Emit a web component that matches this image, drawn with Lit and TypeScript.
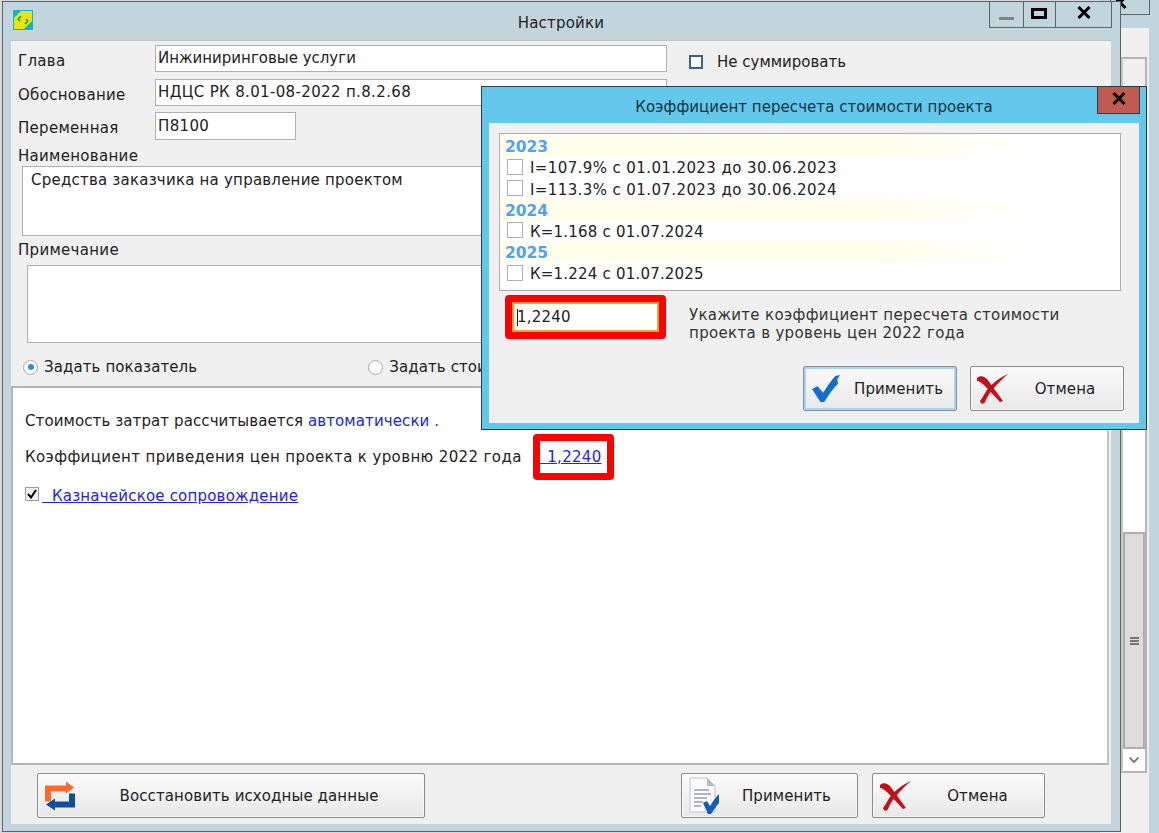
import { LitElement, html, css, svg } from "lit";
import { customElement } from "lit/decorators.js";

const crossIcon = svg`<svg viewBox="0 0 32 30" width="32" height="30"><path d="M0 4 C3 1 7 2 10 5 L26 27 L23 28 L8 12 C5 9 2 7 0 7 Z" fill="#c1121c"/><path d="M31 0 C24 3 15 9 10 16 C7 20 5 25 3 27 C4 31 7 30 8 28 C10 23 13 18 17 14 C21 9 26 4 31 0 Z" fill="#c1121c"/></svg>`;
const checkIcon = svg`<svg viewBox="0 0 32 30" width="30" height="28"><path d="M1 15 L7 12 L13 19 C17 12 21 7 26 1 L31 0 L28 5 L29 9 C24 14 19 21 14 29 L10 29 Z" fill="#0f6fd0"/></svg>`;
const swapIcon = svg`<svg viewBox="0 0 31 31" width="31" height="31"><path d="M0 5 H21 V1 L29 7 L21 13 V11 H6 V21 H0 Z" fill="#ff6a2b"/><path d="M30 13 V27 H10 V30 L1 24 L10 18 V21 H24 V13 Z" fill="#0f4e9a"/></svg>`;
const docIcon = svg`<svg viewBox="0 0 32 38" width="32" height="38"><path d="M1 1 H18 L26 9 V35 H1 Z" fill="#fafafa" stroke="#c4c8cc"/><path d="M18 1 V9 H26 Z" fill="#b8bcc0"/><path d="M5 13 H20 M5 17 H22 M5 21 H18 M5 25 H14 M5 29 H12" stroke="#9aa0a6" stroke-width="1.3"/><path d="M14 26 L18 24 L21 29 C24 24 27 20 30 17 L30 26 C27 29 25 33 22 37 L19 37 Z" fill="#0f5fb8"/></svg>`;
const boldX = svg`<svg viewBox="0 0 14 13" width="14" height="13"><path d="M1.5 1 L12.5 12 M12.5 1 L1.5 12" stroke="#000" stroke-width="3"/></svg>`;

@customElement("app-root")
export class AppRoot extends LitElement {
  static styles = css`
    :host { display: block; width: 1159px; height: 833px; font-family: "DejaVu Sans", sans-serif; font-size: 15px; color: #222; }
    * { box-sizing: border-box; }
    .desk { position: relative; width: 1159px; height: 833px; overflow: hidden; background: #d8d8d8; }

    .back { position: absolute; left: 1100px; top: 0; width: 59px; height: 833px; background: #c2d5dc; }
    .back-btn { position: absolute; left: 10px; top: -2px; width: 40px; height: 17px; border: 1px solid #5a6468; }
    .back-x { position: absolute; left: 13px; top: -5px; }
    .back-body { position: absolute; left: 0; top: 28px; width: 49px; bottom: 0; background: #f0f0f0; }
    .scroll { position: absolute; left: 21px; top: 57px; width: 26px; height: 716px; border: 2px solid #b4b4b4; border-left: 2px solid #c8c8c8; background: #fff; display: flex; flex-direction: column; }
    .sup { height: 36px; flex: none; background: #f0f0f0; }
    .track { flex: 1; }
    .thumb { height: 217px; flex: none; background: #dcdcdc; border: 2px solid #aeaeae; display: flex; flex-direction: column; align-items: center; justify-content: center; gap: 1px; }
    .thumb i { display: block; width: 9px; height: 2px; background: #777; }
    .sdown { height: 22px; flex: none; display: flex; align-items: center; justify-content: center; background: #fff; }

    .win { position: absolute; left: 2px; top: 1px; width: 1119px; height: 831px; background: #c2d5dc; border: 1px solid #5a6468; padding: 0 9px 8px 8px; display: flex; flex-direction: column; }
    .title { height: 38px; flex: none; display: flex; align-items: flex-start; position: relative; }
    .app-ico { margin: 8px 0 0 2px; width: 20px; height: 20px; }
    .title-text { position: absolute; left: 0; right: 0; top: 11px; text-align: center; letter-spacing: 0.2px; line-height: 20px; color: #222; }
    .wbtns { position: absolute; right: -1px; top: -1px; height: 27px; display: flex; border: 1px solid #5a6468; border-top: none; }
    .wbtn { display: flex; align-items: center; justify-content: center; border-left: 1px solid #5a6468; }
    .wbtn:first-child { border-left: none; }
    .wb-min { width: 33px; }
    .wb-min i { display: block; width: 15px; height: 3px; background: #808080; margin-top: 9px; }
    .wb-max { width: 32px; }
    .wb-max i { display: block; width: 16px; height: 11px; border: 3px solid #000; margin: -2px 0 0 -2px; }
    .wb-close { width: 56px; padding-bottom: 3px; }

    .panel { flex: 1; background: #f0f0f0; border-top: 1px solid #b9c6cb; display: flex; flex-direction: column; width: 1100px; }
    .form { height: 346px; flex: none; padding: 4px 0 0 7px; display: flex; flex-direction: column; }
    .row { display: flex; align-items: flex-start; }
    .lbl { width: 137px; flex: none; padding-top: 6px; line-height: 20px; letter-spacing: 0.3px; }
    .inp { height: 27px; background: #fff; border: 1px solid #b0b0b0; padding: 0 0 1px 2px; display: flex; align-items: center; flex: none; }
    .w512 { width: 512px; }
    .w141 { width: 141px; height: 28px; }
    .digits { letter-spacing: 0.35px; }
    .r2 { margin-top: 7px; }
    .r3 { margin-top: 6px; }
    .chk-wrap { display: flex; align-items: center; margin: 8px 0 0 22px; gap: 14px; }
    .chk { width: 14px; height: 14px; border: 2px solid #3f6288; background: #fff; flex: none; }
    .cap { line-height: 18px; margin-top: 7px; height: 19px; letter-spacing: 0.3px; }
    .cap2 { margin-top: 5px; height: 18px; }
    .ta { background: #fff; border: 1px solid #b0b0b0; }
    .ta1 { height: 70px; margin-left: 4px; margin-right: 10px; padding: 3px 8px; line-height: 20px; letter-spacing: 0.22px; }
    .ta2 { height: 78px; margin-left: 9px; margin-right: 10px; margin-top: 6px; }
    .radios { display: flex; align-items: center; margin-top: 14px; margin-left: 5px; height: 20px; letter-spacing: 0.1px; white-space: nowrap; }
    .radio { width: 15px; height: 15px; border-radius: 50%; border: 1px solid #a8a8a8; background: #fff; display: flex; align-items: center; justify-content: center; flex: none; margin-right: 6px; }
    .radio.on::after { content: ""; width: 6px; height: 6px; border-radius: 50%; background: #2f8ae8; }
    .r-b { margin-left: 171px; }

    .white { height: 379px; flex: none; width: 1098px; background: #fff; border: 2px solid #b4b4b4; border-right-color: #c4c4c4; margin-top: -1px; padding: 0 0 0 12px; display: flex; flex-direction: column; }
    .line { line-height: 20px; white-space: pre; }
    .l1 { margin-top: 23px; letter-spacing: 0.1px; }
    .l2 { margin-top: 3px; display: flex; align-items: center; letter-spacing: 0.38px; }
    .a { color: #2323e6; }
    .u { color: #2323e6; text-decoration: underline; white-space: pre; }
    .red-link { border: 7px solid #ff0000; border-radius: 4px; width: 81px; height: 46px; margin-left: 11px; display: flex; align-items: center; letter-spacing: 0.3px; word-spacing: -1.3px; }
    .l3 { margin-top: 6px; display: flex; align-items: center; letter-spacing: 0.2px; }
    .cb3 { width: 14px; height: 14px; background: #f0f0f0; border: 1px solid #a0a0a0; margin: -4px 3px 0 0; display: flex; align-items: center; justify-content: center; }

    .bottom { height: 59px; flex: none; display: flex; padding: 8px 0 0 26px; letter-spacing: 0.1px; }
    .btn { height: 45px; border: 1px solid #8c8c8c; border-radius: 2px; background: linear-gradient(#fbfbfb, #e8e8e8); display: flex; align-items: center; position: relative; flex: none; box-shadow: inset 0 0 0 1px #f8f8f8; color: #222; }
    .btn svg { position: absolute; top: 50%; transform: translateY(-50%); }
    .btn span { position: absolute; left: 0; right: 0; text-align: center; }
    .b-restore { width: 388px; }
    .b-restore svg { left: 7px; }
    .b-restore span { left: 54px; right: 18px; }
    .b-apply { width: 177px; margin-left: 256px; }
    .b-apply svg { left: 7px; }
    .b-apply span { left: 52px; right: 18px; }
    .b-cancel { width: 173px; margin-left: 14px; }
    .b-cancel svg { left: 7px; }
    .b-cancel span { left: 54px; right: 16px; }

    .dlg { position: absolute; left: 481px; top: 86px; width: 666px; height: 344px; background: #64c8ec; border: 1px solid #2c3c44; padding: 0 7px 6px 7px; display: flex; flex-direction: column; }
    .d-title { height: 36px; flex: none; text-align: center; line-height: 40px; letter-spacing: 0.05px; color: #16323c; }
    .d-close { position: absolute; right: 6px; top: 0; width: 43px; height: 27px; background: #c15a52; border: 1px solid #2c3c44; border-top: none; display: flex; align-items: center; justify-content: center; padding-bottom: 3px; }
    .d-body { flex: 1; background: #f0f0f0; padding: 10px 0 0 10px; display: flex; flex-direction: column; }
    .list { width: 622px; height: 158px; flex: none; background: #fff; border: 1px solid #aeaeae; padding: 1px 1px; }
    .yr { height: 21px; line-height: 25px; color: #4fa3f5; font-weight: 700; font-size: 15.5px; padding-left: 4px; background: linear-gradient(90deg, #fffeea 0, #fffeea 60%, #ffffff 86%); }
    .it { height: 21.4px; display: flex; align-items: center; padding: 3px 0 0 6px; color: #222; }
    .it .cb { margin-top: -3px; }
    .sp-a { letter-spacing: 0.4px; }
    .sp-b { letter-spacing: 0.2px; }
    .cb { width: 16px; height: 16px; border: 1px solid #b0b0b0; background: #fff; margin-right: 7px; flex: none; }
    .d-row { display: flex; margin-top: 4px; margin-left: 6px; }
    .red-box { width: 161px; height: 44px; border: 7px solid #ff0000; border-radius: 4px; flex: none; }
    .d-inp { height: 100%; border: 2px solid #f0a030; background: #fff; display: flex; align-items: center; padding-left: 3px; letter-spacing: 0.2px; }
    .caret { width: 1px; height: 17px; background: #222; margin-right: -1px; }
    .hint { margin: 11px 0 0 23px; line-height: 18px; color: #333; letter-spacing: 0.33px; white-space: nowrap; }
    .d-btns { display: flex; margin: 24px 0 0 304px; letter-spacing: 0.1px; }
    .d-btns .btn { width: 154px; }
    .focus { border: 1px solid #8a8f94; box-shadow: inset 0 0 0 2px #a9d4f8; }
    .btn.d-apply svg { left: 7px; }
    .btn.d-apply span { left: 50px; right: 13px; }
    .d-cancel { margin-left: 13px; }
    .btn.d-cancel svg { left: 6px; }
    .btn.d-cancel span { left: 52px; right: 16px; }
  `;

  private item(t: string, cls: string) {
    return html`<div class="it ${cls}"><div class="cb"></div>${t}</div>`;
  }

  render() {
    return html`<div class="desk">
      <div class="back">
        <div class="back-body"></div>
        <div class="back-btn"></div>
        <div class="back-x">${boldX}</div>
        <div class="scroll">
          <div class="sup"></div>
          <div class="track"></div>
          <div class="thumb"><i></i><i></i><i></i></div>
          <div class="sdown"><svg width="12" height="8" viewBox="0 0 12 8"><path d="M1.5 1.5 L6 6 L10.5 1.5" fill="none" stroke="#666" stroke-width="1.6"/></svg></div>
        </div>
      </div>

      <div class="win">
        <div class="title">
          <svg class="app-ico" viewBox="0 0 20 20" width="20" height="20"><rect width="20" height="20" fill="#08b8d0"/><rect x="1" y="1" width="18" height="18" fill="#e8e410"/><path d="M1 1 H8 L1 8 Z M19 19 H11 L19 11 Z" fill="#08b8d0"/><path d="M5 9 L8 6 M15 11 L12 14 M7 11 L5 9 M13 9 L15 11" stroke="#2a8a60" stroke-width="1.5"/></svg>
          <div class="title-text">Настройки</div>
          <div class="wbtns">
            <div class="wbtn wb-min"><i></i></div>
            <div class="wbtn wb-max"><i></i></div>
            <div class="wbtn wb-close">${boldX}</div>
          </div>
        </div>
        <div class="panel">
          <div class="form">
            <div class="row">
              <div class="lbl">Глава</div>
              <div class="inp w512">Инжиниринговые услуги</div>
              <div class="chk-wrap"><div class="chk"></div>Не суммировать</div>
            </div>
            <div class="row r2">
              <div class="lbl">Обоснование</div>
              <div class="inp w512 digits">НДЦС РК 8.01-08-2022 п.8.2.68</div>
            </div>
            <div class="row r3">
              <div class="lbl">Переменная</div>
              <div class="inp w141 digits">П8100</div>
            </div>
            <div class="cap">Наименование</div>
            <div class="ta ta1">Средства заказчика на управление проектом</div>
            <div class="cap cap2">Примечание</div>
            <div class="ta ta2"></div>
            <div class="radios">
              <div class="radio on"></div>Задать показатель
              <div class="radio r-b"></div>Задать стоимость
            </div>
          </div>
          <div class="white">
            <div class="line l1">Стоимость затрат рассчитывается <span class="a">автоматически .</span></div>
            <div class="line l2">Коэффициент приведения цен проекта к уровню 2022 года<div class="red-link"><span class="u">  1,2240</span></div></div>
            <div class="line l3"><div class="cb3"><svg width="10" height="10" viewBox="0 0 10 10"><path d="M1 5 L4 8.5 L9 1" fill="none" stroke="#000" stroke-width="2"/></svg></div><span class="u">  Казначейское сопровождение</span></div>
          </div>
          <div class="bottom">
            <div class="btn b-restore">${swapIcon}<span>Восстановить исходные данные</span></div>
            <div class="btn b-apply">${docIcon}<span>Применить</span></div>
            <div class="btn b-cancel">${crossIcon}<span>Отмена</span></div>
          </div>
        </div>
      </div>

      <div class="dlg">
        <div class="d-title">Коэффициент пересчета стоимости проекта</div>
        <div class="d-close">${boldX}</div>
        <div class="d-body">
          <div class="list">
            <div class="yr">2023</div>
            ${this.item("I=107.9% с 01.01.2023 до 30.06.2023", "sp-a")}
            ${this.item("I=113.3% с 01.07.2023 до 30.06.2024", "sp-a")}
            <div class="yr">2024</div>
            ${this.item("К=1.168 с 01.07.2024", "sp-b")}
            <div class="yr">2025</div>
            ${this.item("К=1.224 с 01.07.2025", "sp-b")}
          </div>
          <div class="d-row">
            <div class="red-box"><div class="d-inp"><div class="caret"></div>1,2240</div></div>
            <div class="hint">Укажите коэффициент пересчета стоимости<br />проекта в уровень цен 2022 года</div>
          </div>
          <div class="d-btns">
            <div class="btn d-apply focus">${checkIcon}<span>Применить</span></div>
            <div class="btn d-cancel">${crossIcon}<span>Отмена</span></div>
          </div>
        </div>
      </div>
    </div>`;
  }
}
